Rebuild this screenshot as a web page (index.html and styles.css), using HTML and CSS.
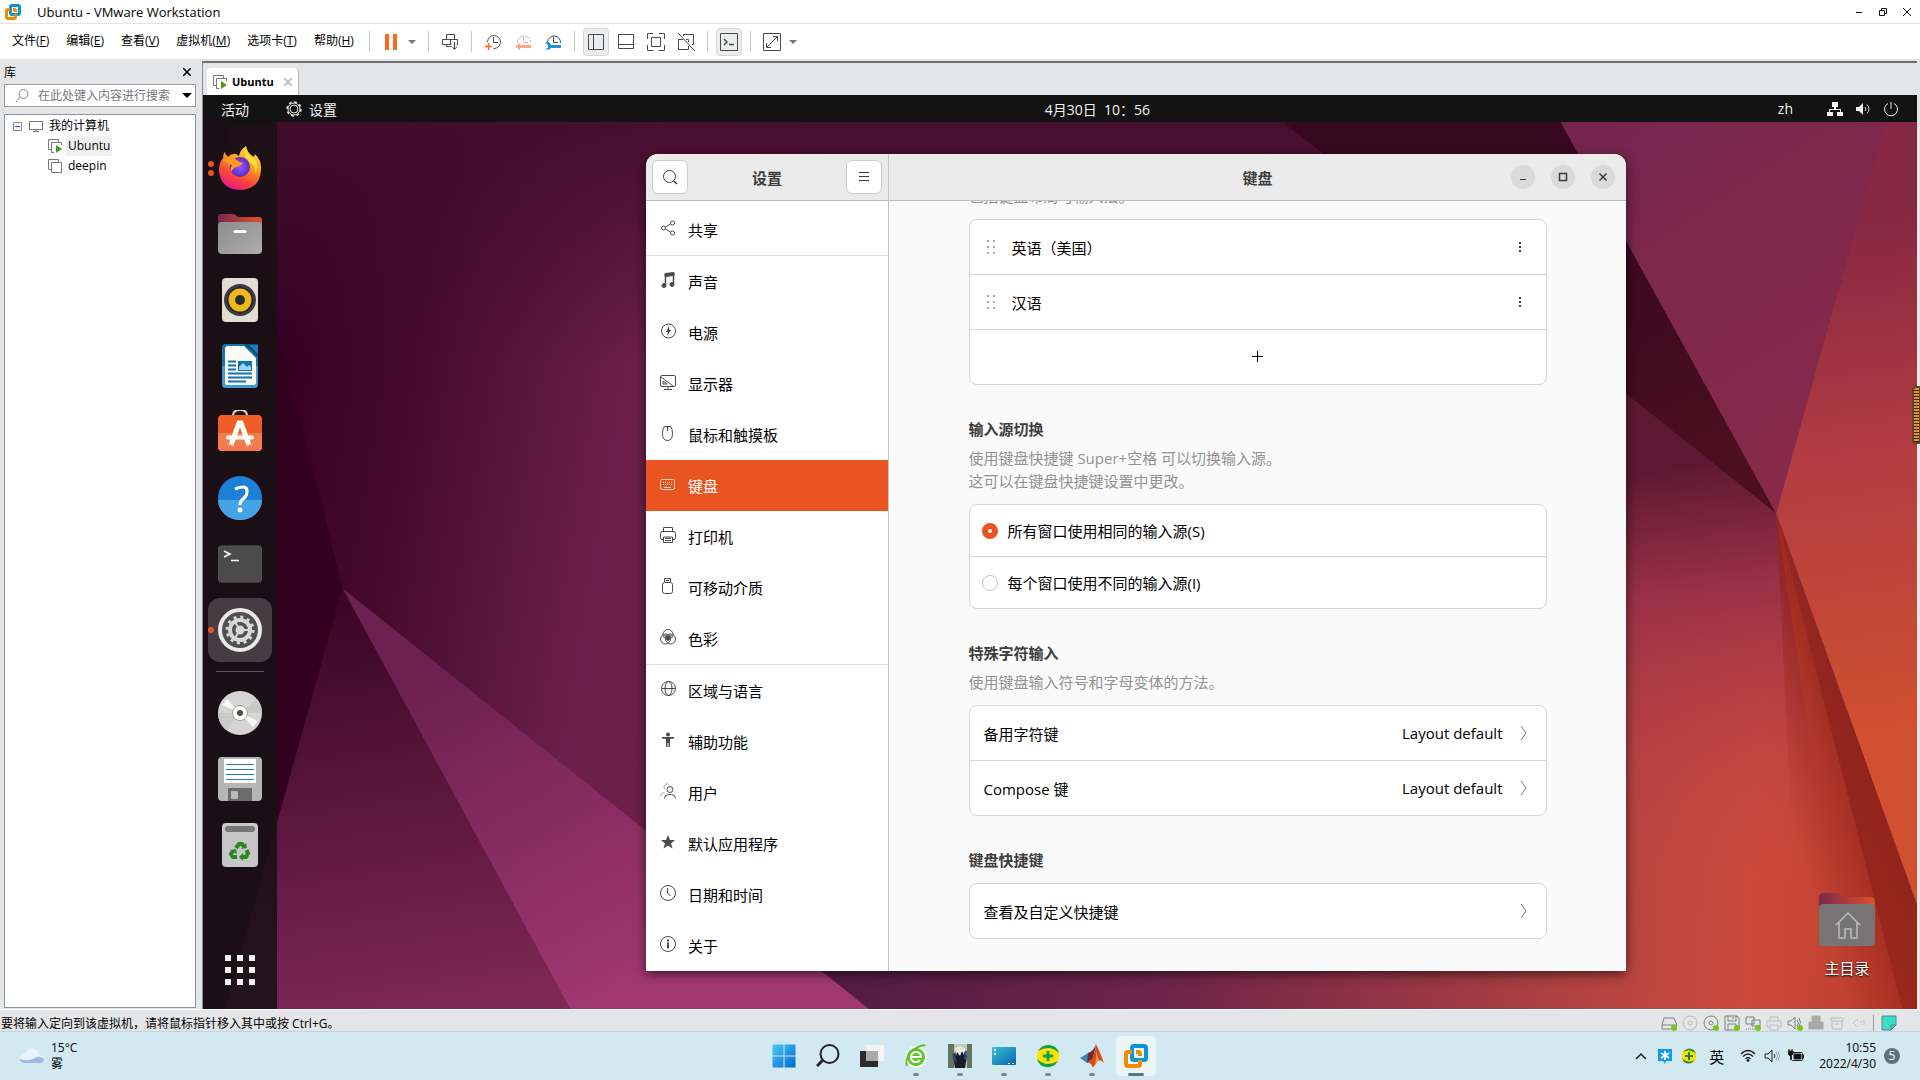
FILE: index.html
```html
<!DOCTYPE html>
<html lang="zh-CN">
<head>
    <meta charset="UTF-8">
    <meta name="viewport" content="width=device-width, initial-scale=1.0">
    <title>Ubuntu - VMware Workstation</title>
    <link rel="stylesheet" href="styles.css">
</head>
<body>
    <header class="titlebar">
        <svg class="app-logo" viewBox="0 0 16 16" fill="none" stroke-width="3"><rect x="5.500" y="1.500" width="9" height="9" rx="1.500" stroke="#0c95d3"/><path d="M5 5.500H3Q1.500 5.500 1.500 7v6q0 1.500 1.500 1.500h6q1.500 0 1.500-1.500v-3M8 5.500h1.500q1 0 1 1V8" stroke="#f38b00"/></svg>
        <span class="titlebar-text">Ubuntu - VMware Workstation</span>
        <div class="titlebar-controls">
            <button aria-label="最小化"><svg viewBox="0 0 10 10"><path d="M2 5.500h6"/></svg></button>
            <button aria-label="还原"><svg viewBox="0 0 10 10"><path d="M1.500 3.500h5v5h-5zM3.500 3V1.500h5v5H7"/></svg></button>
            <button aria-label="关闭"><svg viewBox="0 0 10 10"><path d="M1 1l8 8M9 1L1 9"/></svg></button>
        </div>
    </header>

    <div class="menubar">
        <nav class="menus">
            <button>文件(<u>F</u>)</button>
            <button>编辑(<u>E</u>)</button>
            <button>查看(<u>V</u>)</button>
            <button>虚拟机(<u>M</u>)</button>
            <button>选项卡(<u>T</u>)</button>
            <button>帮助(<u>H</u>)</button>
        </nav>
        <span class="sep"></span>
        <div class="tool-split">
            <button class="tool" aria-label="挂起"><svg viewBox="0 0 18 18"><path d="M3 1h4v16H3zM11 1h4v16h-4z" fill="#ff671b"/></svg></button>
            <button class="tool-caret" aria-label="电源选项"><svg viewBox="0 0 8 4"><path d="M0 0h8L4 4z" fill="#777"/></svg></button>
        </div>
        <span class="sep"></span>
        <button class="tool" aria-label="发送按键"><svg viewBox="0 0 18 18" class="line"><path d="M5.500 6.500v-5h8v5M10.500 11.500h-9v-5h15v5h-1M9.500 6.500v5M5.500 11.500v2h5M13.500 9v7M11 13.500l2.500 3 2.500-3"/></svg></button>
        <span class="sep"></span>
        <div class="tool-group">
            <button class="tool" aria-label="拍摄快照"><svg viewBox="0 0 18 18" class="line"><path d="M3.500 9a6.500 6.500 0 1 1 6 6.500M9.500 4v5.500H14"/><path d="M4.500 10v7M1 13.500h7" stroke="#ff671b" stroke-width="1.500"/></svg></button>
            <button class="tool" aria-label="恢复快照"><svg viewBox="0 0 18 18" class="line"><path d="M3.500 10a6.500 6.500 0 0 1 13-1M9.500 4v5.500H14" stroke="#bbb" stroke-dasharray="5 1"/><path d="M1 13.500L6 10v2h11v3H6v2z" fill="#ffa680" stroke="none"/></svg></button>
            <button class="tool" aria-label="管理快照"><svg viewBox="0 0 18 18" class="line"><path d="M3.500 9a6.500 6.500 0 0 1 13 1M9.500 4v5.500H14"/><path d="M1 10q3-2 5 0l1 2h10v3H7q-2 3-6 1l3-1v-3z" fill="#2490dc" stroke="none"/></svg></button>
        </div>
        <span class="sep"></span>
        <div class="tool-group">
            <button class="tool pressed" aria-label="显示库"><svg viewBox="0 0 18 18" class="line"><path d="M1.500 1.500h15v15h-15zM6.500 1.500v15"/></svg></button>
            <button class="tool" aria-label="缩略图栏"><svg viewBox="0 0 18 18" class="line"><path d="M1.500 1.500h15v14h-15zM1.500 11.500h15"/></svg></button>
            <button class="tool" aria-label="全屏"><svg viewBox="0 0 18 18" class="line"><path d="M.5 6V.5H6M12 .5h5.500V6M17.500 12v5.500H12M6 17.500H.5V12M4.500 4.500h9v9h-9z"/></svg></button>
            <button class="tool" aria-label="Unity"><svg viewBox="0 0 18 18" class="line"><path d="M1 0l17 18M6.500 3V1.500h10v10H15M6 6.500H1.500v10h10V13M9 6.500h2.500V9"/></svg></button>
        </div>
        <span class="sep"></span>
        <button class="tool pressed" aria-label="控制台视图"><svg viewBox="0 0 18 18" class="line"><path d="M.5 .5h17v17H.5z"/><path d="M4 6l3 3-3 3M9 11.500h5" stroke-width="1.500"/></svg></button>
        <span class="sep"></span>
        <div class="tool-split">
            <button class="tool" aria-label="拉伸"><svg viewBox="0 0 18 18" class="line"><path d="M.5 .5h17v17H.5zM10 3.500h4.500V8M3.500 10v4.500H8M14.500 3.500l-11 11"/></svg></button>
            <button class="tool-caret" aria-label="拉伸选项"><svg viewBox="0 0 8 4"><path d="M0 0h8L4 4z" fill="#777"/></svg></button>
        </div>
    </div>

    <div class="workspace">
        <aside class="library">
            <div class="library-head">
                <span>库</span>
                <button aria-label="关闭库"><svg viewBox="0 0 8 8"><path d="M0 0l8 8M8 0L0 8"/></svg></button>
            </div>
            <label class="library-search">
                <svg class="search-icon" viewBox="0 0 14 14"><circle cx="8.500" cy="5" r="4.500"/><path d="M5 8L1 13"/></svg>
                <input type="text" placeholder="在此处键入内容进行搜索" aria-label="搜索">
                <svg class="search-caret" viewBox="0 0 10 5"><path d="M0 0h10L5 5z"/></svg>
            </label>
            <ul class="tree">
                <li>
                    <svg class="expander" viewBox="0 0 9 9"><path d="M.5 .5h8v8h-8z" fill="#f4f4f4" stroke="#8a8a8a"/><path d="M2 4.500h5" stroke="#3c56b4"/></svg>
                    <svg class="tree-icon" viewBox="0 0 14 12"><path d="M.5 1.500h13v8H.5zM7 9.500v2M4 11.500h6" fill="none" stroke="#777"/></svg>
                    <span>我的计算机</span>
                </li>
                <li class="child">
                    <svg class="tree-icon" viewBox="0 0 14 14"><path d="M3 10.500H.5V.5h10V3M6 13.500H3.500v-10h10V6" fill="none" stroke="#777"/><path d="M8 6l6 4-6 4z" fill="#4b9b12"/></svg>
                    <span class="selected">Ubuntu</span>
                </li>
                <li class="child">
                    <svg class="tree-icon" viewBox="0 0 14 14"><path d="M3 10.500H.5V.5h10V3M3.500 3.500h10v10h-10z" fill="none" stroke="#777"/></svg>
                    <span>deepin</span>
                </li>
            </ul>
        </aside>

        <main class="console">
            <div class="tabs">
                <div class="tab">
                    <svg class="tree-icon" viewBox="0 0 14 14"><path d="M3 10.500H.5V.5h10V3M6 13.500H3.500v-10h10V6" fill="none" stroke="#777"/><path d="M8 6l6 4-6 4z" fill="#4b9b12"/></svg>
                    <span>Ubuntu</span>
                    <button aria-label="关闭标签"><svg viewBox="0 0 8 8"><path d="M0 0l8 8M8 0L0 8"/></svg></button>
                </div>
            </div>

            <div class="guest">
                <div class="topbar">
                    <div class="topbar-left">
                        <span>活动</span>
                        <span class="topbar-app"><svg viewBox="0 0 16 16" fill="none" stroke="#e8e8e8"><circle cx="8" cy="8" r="7" stroke-width="1.500" stroke-dasharray="2.750 2.750"/><circle cx="8" cy="8" r="6"/><circle cx="8" cy="8" r="4"/></svg>设置</span>
                    </div>
                    <time>4月30日&nbsp; 10：56</time>
                    <div class="topbar-right">
                        <span>zh</span>
                        <div class="topbar-status">
                            <svg viewBox="0 0 16 16"><path d="M5 1h6v5H9v2h5v3h2v4h-6v-4h3V9H3v2h3v4H0v-4h2V8h5V6H5z" fill="#f2f2f2"/></svg>
                            <svg viewBox="0 0 16 16"><path d="M1 6h3l4-4v12l-4-4H1z" fill="#f2f2f2"/><path d="M10 6q2 2 0 4M12 3.500q4 4.500 0 9" fill="none" stroke="#ccc"/></svg>
                            <svg viewBox="0 0 16 16" fill="none" stroke="#eee"><path d="M5 2.500a6.500 6.500 0 1 0 6 0M8 1v7"/></svg>
                        </div>
                    </div>
                </div>

                <div class="desktop">
                    <svg class="wallpaper" viewBox="166 100 1400 725" preserveAspectRatio="none">
                        <defs>
                            <linearGradient id="base" gradientUnits="userSpaceOnUse" x1="240" y1="260" x2="660" y2="330"><stop offset="0" stop-color="#360023"/><stop offset=".3" stop-color="#4a0d30"/><stop offset=".65" stop-color="#6b1f4a"/><stop offset="1" stop-color="#6a2247"/></linearGradient>
                            <linearGradient id="top" gradientUnits="userSpaceOnUse" x1="500" y1="100" x2="500" y2="300"><stop offset="0" stop-color="#430d2b" stop-opacity=".9"/><stop offset="1" stop-color="#430d2b" stop-opacity="0"/></linearGradient>
                            <linearGradient id="magenta" gradientUnits="userSpaceOnUse" x1="350" y1="560" x2="500" y2="824"><stop offset="0" stop-color="#6d2150"/><stop offset="1" stop-color="#a23872"/></linearGradient>
                            <linearGradient id="lowleft" gradientUnits="userSpaceOnUse" x1="280" y1="500" x2="330" y2="824"><stop offset="0" stop-color="#3c0727"/><stop offset="1" stop-color="#7c2754"/></linearGradient>
                            <linearGradient id="floor" gradientUnits="userSpaceOnUse" x1="700" y1="700" x2="1560" y2="750"><stop offset="0" stop-color="#541c44"/><stop offset=".3" stop-color="#6e2449"/><stop offset=".7" stop-color="#b34340"/><stop offset=".85" stop-color="#cc4a3c"/><stop offset="1" stop-color="#ba3b28"/></linearGradient>
                            <linearGradient id="fold" gradientUnits="userSpaceOnUse" x1="1390" y1="380" x2="1430" y2="720"><stop offset="0" stop-color="#5e1932"/><stop offset=".3" stop-color="#9a3147"/><stop offset="1" stop-color="#c84842" stop-opacity="0"/></linearGradient>
                            <linearGradient id="sky" gradientUnits="userSpaceOnUse" x1="1300" y1="110" x2="1480" y2="380"><stop offset="0" stop-color="#76264e"/><stop offset="1" stop-color="#882a49"/></linearGradient>
                            <linearGradient id="edge" gradientUnits="userSpaceOnUse" x1="1500" y1="180" x2="1560" y2="600"><stop offset="0" stop-color="#862743"/><stop offset=".45" stop-color="#b23c42"/><stop offset="1" stop-color="#d0502f"/></linearGradient>
                            <linearGradient id="shade" gradientUnits="userSpaceOnUse" x1="1440" y1="440" x2="1550" y2="800"><stop offset="0" stop-color="#a02e3c"/><stop offset=".5" stop-color="#8f2320"/><stop offset="1" stop-color="#9f2917"/></linearGradient>
                            <linearGradient id="side" gradientUnits="userSpaceOnUse" x1="1478" y1="720" x2="1540" y2="700"><stop offset="0" stop-color="#9c2a1f" stop-opacity="0"/><stop offset="1" stop-color="#92241b" stop-opacity=".8"/></linearGradient>
                            <linearGradient id="dark" gradientUnits="userSpaceOnUse" x1="1300" y1="160" x2="1400" y2="380"><stop offset="0" stop-color="#36081f"/><stop offset="1" stop-color="#4c0f20"/></linearGradient>
                        </defs>
                        <path d="M166 100h1400v725H166z" fill="url(#base)"/>
                        <path d="M166 100h1000v200H166z" fill="url(#top)"/>
                        <path d="M166 30l114 451-96 344h-18z" fill="#330020"/>
                        <path d="M280 481l186 344H184z" fill="url(#lowleft)"/>
                        <path d="M280 481l430 344H466z" fill="url(#magenta)"/>
                        <path d="M527 677h50L1451 420l115 405H710z" fill="url(#floor)"/>
                        <path d="M1200 560l128-238 123 98 60 405h-311z" fill="url(#fold)"/>
                        <path d="M1048 100h227l176 320-123-98z" fill="url(#dark)"/>
                        <path d="M1275 100h265l-89 320z" fill="url(#sky)"/>
                        <path d="M1540 100h26v640L1451 420z" fill="url(#edge)"/>
                        <path d="M1451 420l115 320v85h-12z" fill="url(#shade)"/>
                        <path d="M1451 420l20 405h95v-85z" fill="url(#side)"/>
                    </svg>

                    <nav class="dock">
                        <button class="dock-item" aria-label="Firefox">
                            <span class="dots"><i></i><i></i></span>
                            <svg viewBox="0 0 44 44"><defs><linearGradient id="fx" x1=".8" y1="0" x2=".3" y2="1"><stop offset="0" stop-color="#ffe84a"/><stop offset=".4" stop-color="#ff9a1f"/><stop offset=".7" stop-color="#ff4a36"/><stop offset="1" stop-color="#e6158a"/></linearGradient><radialGradient id="globe"><stop offset="0" stop-color="#9059ff"/><stop offset="1" stop-color="#5b2bc4"/></radialGradient></defs><path d="M28 0q1 7 8 11l1-3q7 7 6 16-1 19-21 20Q2 43 1 24q0-7 4-12l1-6 4 5q4-4 8-3l3 2q1-6 7-10z" fill="url(#fx)"/><circle cx="22" cy="21" r="10" fill="url(#globe)"/><path d="M5 14q6-6 14 0 3 3 6 3-2 3-7 4-4 2-5 5-1-4 1-7-5-1-9-5z" fill="#ff9a1f"/><path d="M28 0q0 9 8 13 6 6 1 16 2-7-5-13-8-7-4-16z" fill="#ffdf37"/></svg>
                        </button>
                        <button class="dock-item" aria-label="文件">
                            <svg viewBox="0 0 44 44"><defs><linearGradient id="fol" x1="0" x2="1"><stop offset="0" stop-color="#78294f"/><stop offset="1" stop-color="#e0502a"/></linearGradient><linearGradient id="gray" x1="0" y1="0" x2="1" y2="1"><stop offset="0" stop-color="#8d8d8d"/><stop offset="1" stop-color="#adadad"/></linearGradient></defs><path d="M0 5q0-3 3-3h13l4 3h21q3 0 3 3v12H0z" fill="url(#fol)"/><rect y="10" width="44" height="32" rx="4" fill="url(#gray)"/><path d="M17 19.500h10" stroke="#fff" stroke-width="3" stroke-linecap="round"/></svg>
                        </button>
                        <button class="dock-item" aria-label="Rhythmbox">
                            <svg viewBox="0 0 44 44"><rect x="4" width="36" height="44" rx="4" fill="#e3ded3"/><circle cx="22" cy="22" r="16" fill="#3c3c46"/><circle cx="22" cy="22" r="13" fill="#222"/><circle cx="22" cy="22" r="11.500" fill="#efb915"/><circle cx="22" cy="22" r="5" fill="#292929"/></svg>
                        </button>
                        <button class="dock-item" aria-label="LibreOffice Writer">
                            <svg viewBox="0 0 44 44"><rect x="4" width="36" height="44" rx="4" fill="#1673aa"/><path d="M4 22h36v18q0 4-4 4H8q-4 0-4-4z" fill="#3b9bd2"/><path d="M10 2h16l12 12v25q0 2-2 2H9q-2 0-2-2V5q0-3 3-3z" fill="#fbfbfb"/><path d="M26 0h14v13z" fill="#104a75"/><path d="M31 1h9v9z" fill="#1683bd"/><path d="M10 17.500h8M10 21.500h8M10 25.500h8M10 29.500h24M10 33.500h24M10 37.500h18" stroke="#1673aa" stroke-width="2"/><path d="M20 17h14v10H20z" fill="#1673aa"/><path d="M21 26v-3l4-4 4 4 2-2 2 2v3z" fill="#9bd6f2"/></svg>
                        </button>
                        <button class="dock-item" aria-label="Ubuntu Software">
                            <svg viewBox="0 0 44 44"><path d="M15 6q0-6 7-6t7 6" fill="none" stroke="#eadba8" stroke-width="2"/><rect y="5" width="44" height="36" rx="4" fill="#ef5e27"/><path d="M0 23h44v14q0 4-4 4H4q-4 0-4-4z" fill="#f37c4c"/><path d="M13 35l8-22h2l8 22" fill="none" stroke="#fff" stroke-width="5"/><path d="M10 27.500h24" stroke="#fff" stroke-width="4" stroke-linecap="round"/></svg>
                        </button>
                        <button class="dock-item" aria-label="帮助">
                            <svg viewBox="0 0 44 44"><circle cx="22" cy="22" r="22" fill="#1b80d6"/><path d="M0 24h44a22 20 0 0 1-44 0z" fill="#45a3e6"/><path d="M17 13q13-5 12 3 0 4-4 7-3 2-3 6" fill="none" stroke="#fff" stroke-width="3"/><circle cx="22" cy="34" r="2.500" fill="#fff"/></svg>
                        </button>
                        <button class="dock-item" aria-label="终端">
                            <svg viewBox="0 0 44 44"><rect y="4" width="44" height="36" rx="4" fill="#4b4b4b" stroke="#5d5d5d"/><path d="M6 9l6 3-6 3M13 18.500h8" fill="none" stroke="#fff" stroke-width="1.500"/></svg>
                        </button>
                        <button class="dock-item active" aria-label="设置">
                            <span class="dots"><i></i></span>
                            <svg viewBox="0 0 44 44" fill="none"><circle cx="22" cy="22" r="20" fill="#505050" stroke="#e9e9e7" stroke-width="4"/><circle cx="22" cy="22" r="13" stroke="#d7d7d7" stroke-width="3" stroke-dasharray="3 3.800"/><circle cx="22" cy="22" r="10" stroke="#d7d7d7" stroke-width="4"/><circle cx="22" cy="22" r="4.500" fill="#d7d7d7"/><path d="M25 22h8M20 19l-4-7M20 25l-4 7" stroke="#d7d7d7" stroke-width="2"/></svg>
                        </button>
                        <hr>
                        <button class="dock-item" aria-label="光盘">
                            <svg viewBox="0 0 44 44"><circle cx="22" cy="22" r="22" fill="#d5d5d5"/><path d="M22 22L0 22a22 22 0 0 0 8 17zM22 22l17-14a22 22 0 0 1 5 14z" fill="#c9c9c9"/><path d="M22 22L4 14l5-6zM22 22l18 8-5 6z" fill="#f8f8f8"/><circle cx="22" cy="22" r="7.500" fill="#fff" stroke="#aaa08d"/><circle cx="22" cy="22" r="3" fill="#4b4b4b"/></svg>
                        </button>
                        <button class="dock-item" aria-label="软盘">
                            <svg viewBox="0 0 44 44"><rect width="44" height="44" rx="4" fill="#b5b5b5"/><path d="M6 2h32v24H6z" fill="#fff"/><path d="M8 7.500h28M8 12.500h28M8 17.500h28M8 22.500h28" stroke="#1c7fae"/><path d="M10 31h24v13H10z" fill="#6c6c6c"/><rect x="13" y="34" width="7" height="8" rx="1" fill="#bbb"/></svg>
                        </button>
                        <button class="dock-item" aria-label="回收站">
                            <svg viewBox="0 0 44 44"><rect x="4" width="36" height="44" rx="4" fill="#c6c6c6"/><rect x="7" y="3" width="30" height="6" rx="3" fill="#777"/><g fill="none" stroke="#29881f" stroke-width="4"><path d="M18 25l3-4h3l2 3M28.500 27l1.500 3-2 4h-4M19 34h-4l-2-3 2-3"/></g><path d="M23 26l6-1-1-5zM25 30v8l-4-4zM12 27l6-1 1 5z" fill="#29881f"/></svg>
                        </button>
                        <button class="dock-item apps" aria-label="显示应用程序">
                            <svg viewBox="0 0 44 44" fill="#f0f0f0"><path d="M7 7h6v6H7zM19 7h6v6h-6zM31 7h6v6h-6zM7 19h6v6H7zM19 19h6v6h-6zM31 19h6v6h-6zM7 31h6v6H7zM19 31h6v6h-6zM31 31h6v6h-6z"/></svg>
                        </button>
                    </nav>

                    <a class="home-icon" href="#">
                        <svg viewBox="0 0 56 54"><path d="M0 5q0-5 5-5h14l6 4h26q5 0 5 5v14H0z" fill="url(#fol)"/><rect y="11" width="56" height="42" rx="4" fill="#767475"/><path d="M17 32l12-12 12 12M20 30v15h6v-9h6v9h6V30" fill="none" stroke="#bbb" stroke-width="1.500"/></svg>
                        <span>主目录</span>
                    </a>

                    <section class="settings">
                        <header class="settings-header">
                            <div class="header-side">
                                <button aria-label="搜索设置"><svg viewBox="0 0 16 16"><circle cx="7.500" cy="7.500" r="6"/><path d="M12 12l3 3" stroke-width="1.500"/></svg></button>
                                <h1>设置</h1>
                                <button aria-label="菜单"><svg viewBox="0 0 16 16"><path d="M3 3.500h10M3 7.500h10M3 11.500h10"/></svg></button>
                            </div>
                            <div class="header-main">
                                <h2>键盘</h2>
                                <div class="window-controls">
                                    <button aria-label="最小化"><svg viewBox="0 0 16 16"><path d="M5 10.500h6"/></svg></button>
                                    <button aria-label="最大化"><svg viewBox="0 0 16 16"><path d="M4.500 4.500h7v7h-7z" stroke-width="1.500"/></svg></button>
                                    <button aria-label="关闭"><svg viewBox="0 0 16 16"><path d="M4.500 4.500l7 7M11.500 4.500l-7 7" stroke-width="1.500"/></svg></button>
                                </div>
                            </div>
                        </header>

                        <div class="settings-body">
                            <nav class="settings-nav">
                                <a href="#"><svg viewBox="0 0 16 16"><circle cx="3.500" cy="8" r="2"/><circle cx="12.500" cy="3" r="2"/><circle cx="12.500" cy="13" r="2"/><path d="M5.500 7l5-3M5.500 9l5 3"/></svg>共享</a>
                                <hr>
                                <a href="#"><svg viewBox="0 0 16 16"><path d="M5.500 13V2.500l8-1V12" stroke-width="1.500"/><path d="M5 1.500l9-1v3l-9 1z" class="fill"/><circle cx="4" cy="13.500" r="2" class="fill"/><circle cx="12" cy="12.500" r="2" class="fill"/></svg>声音</a>
                                <a href="#"><svg viewBox="0 0 16 16"><circle cx="8.500" cy="8" r="7"/><path d="M9 3L6 9h2l-1 4 4-6H9z" class="fill" stroke="none"/></svg>电源</a>
                                <a href="#"><svg viewBox="0 0 16 16"><rect x=".5" y="1.500" width="15" height="11" rx="1.500"/><path d="M1 3l12 9M4 15.500h8M8 13v2M3 7v3h4z" /></svg>显示器</a>
                                <a href="#"><svg viewBox="0 0 16 16"><path d="M4.500 1.500h6q2 2 2 7 0 7-5 7t-5-7q0-5 2-7zM7.500 1.500V6"/></svg>鼠标和触摸板</a>
                                <a href="#" class="current"><svg viewBox="0 0 16 16"><rect x=".5" y="3.500" width="14" height="10" rx="1.500"/><path d="M3 6.500h10M3 8.500h10" stroke-dasharray="1 1"/><path d="M4 11.500h7"/></svg>键盘</a>
                                <a href="#"><svg viewBox="0 0 16 16"><path d="M3.500 4.500v-4h9v4M3.500 12.500H2q-1.500 0-1.500-2v-4q0-2 2-2h11q2 0 2 2v4q0 2-1.500 2h-1.500M3.500 10v5.500h9V10zM5 11.500h6M5 13.500h6"/></svg>打印机</a>
                                <a href="#"><svg viewBox="0 0 16 16"><rect x="2.500" y="4.500" width="10" height="11" rx="2"/><path d="M4.500 4V.5h6V4M6 2.500h3" /></svg>可移动介质</a>
                                <a href="#"><svg viewBox="0 0 16 16"><circle cx="8" cy="5.500" r="5"/><circle cx="5.500" cy="10" r="5"/><circle cx="10.500" cy="10" r="5"/><path d="M4 5.500h8l-1 4-3 3-3-3z" fill="#777" stroke="none"/><circle cx="8" cy="9" r="2" class="fill"/></svg>色彩</a>
                                <hr>
                                <a href="#"><svg viewBox="0 0 16 16"><circle cx="8.500" cy="7.500" r="7"/><ellipse cx="8.500" cy="7.500" rx="3.500" ry="7"/><path d="M2 7.500h13"/></svg>区域与语言</a>
                                <a href="#"><svg viewBox="0 0 16 16"><circle cx="8" cy="2.500" r="2" class="fill" stroke="none"/><path d="M2 5h12v1.500l-4 .5v8H8.500v-4h-1v4H6V7l-4-.5z" class="fill" stroke="none"/></svg>辅助功能</a>
                                <a href="#"><svg viewBox="0 0 16 16"><circle cx="10" cy="6.500" r="3"/><path d="M4.500 15.500q0-4 4-4h3q4 0 4 4"/><path d="M9 1.500q-4-2-5 2 0 2 1 3M.5 13.500q0-4 4-4" stroke="#aaa"/></svg>用户</a>
                                <a href="#"><svg viewBox="0 0 16 16"><path d="M8 1l2 5h5l-4 3.500 1.500 5L8 11.500l-4.500 3 1.500-5L1 6h5z" class="fill" stroke="none"/></svg>默认应用程序</a>
                                <a href="#"><svg viewBox="0 0 16 16"><circle cx="8" cy="8" r="7.500"/><path d="M7.500 3v5l3 3"/></svg>日期和时间</a>
                                <a href="#"><svg viewBox="0 0 16 16"><circle cx="8" cy="8" r="7.500"/><path d="M8 3.500v2M7 7.500h1v5" stroke-width="2"/></svg>关于</a>
                            </nav>

                            <div class="settings-main">
                                <div class="panel">
                                    <p class="desc">包括键盘布局与输入法。</p>
                                    <ul class="card">
                                        <li class="source">
                                            <svg class="grip" viewBox="0 0 10 16"><path d="M1 1h2v2H1zM7 1h2v2H7zM1 7h2v2H1zM7 7h2v2H7zM1 13h2v2H1zM7 13h2v2H7z"/></svg>
                                            <span>英语（美国）</span>
                                            <button class="more" aria-label="更多"><svg viewBox="0 0 16 16"><path d="M7 3h2v2H7zM7 7h2v2H7zM7 11h2v2H7z"/></svg></button>
                                        </li>
                                        <li class="source">
                                            <svg class="grip" viewBox="0 0 10 16"><path d="M1 1h2v2H1zM7 1h2v2H7zM1 7h2v2H1zM7 7h2v2H7zM1 13h2v2H1zM7 13h2v2H7z"/></svg>
                                            <span>汉语</span>
                                            <button class="more" aria-label="更多"><svg viewBox="0 0 16 16"><path d="M7 3h2v2H7zM7 7h2v2H7zM7 11h2v2H7z"/></svg></button>
                                        </li>
                                        <li><button class="add" aria-label="添加输入源"><svg viewBox="0 0 12 12"><path d="M5.500 0v11M0 5.500h11"/></svg></button></li>
                                    </ul>

                                    <h3>输入源切换</h3>
                                    <p class="desc with-title">使用键盘快捷键 Super+空格 可以切换输入源。<br>这可以在键盘快捷键设置中更改。</p>
                                    <div class="card radios">
                                        <label><input type="radio" name="switch" checked>所有窗口使用相同的输入源(S)</label>
                                        <label><input type="radio" name="switch">每个窗口使用不同的输入源(I)</label>
                                    </div>

                                    <h3>特殊字符输入</h3>
                                    <p class="desc with-title">使用键盘输入符号和字母变体的方法。</p>
                                    <div class="card">
                                        <a class="link-row" href="#"><span>备用字符键</span><em>Layout default</em><svg viewBox="0 0 8 16"><path d="M1 1l5 7-5 7"/></svg></a>
                                        <a class="link-row" href="#"><span>Compose 键</span><em>Layout default</em><svg viewBox="0 0 8 16"><path d="M1 1l5 7-5 7"/></svg></a>
                                    </div>

                                    <h3>键盘快捷键</h3>
                                    <div class="card">
                                        <a class="link-row" href="#"><span>查看及自定义快捷键</span><svg viewBox="0 0 8 16"><path d="M1 1l5 7-5 7"/></svg></a>
                                    </div>
                                </div>
                            </div>
                        </div>
                    </section>
                </div>
            </div>
        </main>
        <div class="meter"></div>
    </div>

    <div class="statusbar">
        <span>要将输入定向到该虚拟机，请将鼠标指针移入其中或按 Ctrl+G。</span>
        <div class="devices">
            <svg viewBox="0 0 16 16"><path d="M3 3h10l3 7v4H1v-4zM1 10h15"/><circle cx="13" cy="13" r="3" class="on"/></svg>
            <svg viewBox="0 0 16 16" class="off"><circle cx="8" cy="8" r="7"/><circle cx="8" cy="8" r="2"/></svg>
            <svg viewBox="0 0 16 16"><circle cx="8" cy="8" r="7"/><circle cx="8" cy="8" r="2"/><circle cx="13" cy="13" r="3" class="on"/></svg>
            <svg viewBox="0 0 16 16"><path d="M1 1h12l2 2v12H1zM4 1v5h8V1M4 15V9h8v6M9 2v2"/><circle cx="13" cy="13" r="3" class="on"/></svg>
            <svg viewBox="0 0 16 16"><path d="M1 2h8v7H1zM7 5h8v6H7z"/><path d="M1 14h10" stroke-dasharray="1 1"/><circle cx="13" cy="13" r="3" class="on"/></svg>
            <svg viewBox="0 0 16 16" class="off"><path d="M4 6V2h8v4M4 12H1V6h14v6h-3M4 10h8v5H4z"/></svg>
            <svg viewBox="0 0 16 16"><path d="M1 6h3l4-4v12l-4-4H1zM10 5q3 3 0 6M12 3q3 5 0 8"/><circle cx="13" cy="13" r="3" class="on"/></svg>
            <svg viewBox="0 0 16 16"><path d="M4 1h8v6h3v7H1V7h3z" fill="#aaa" stroke="#aaa"/></svg>
            <svg viewBox="0 0 16 16" class="off"><path d="M2 3h12v3H2zM3 6v8h10V6M6 9h4"/></svg>
            <svg viewBox="0 0 16 16" class="off"><path d="M8 4L3 8l5 4M11 6v4M14 5v6" stroke-dasharray="2 1"/></svg>
            <span class="device-sep"></span>
            <svg viewBox="0 0 16 16"><path d="M1 1h14v9l-5 5H1z" fill="#37dfc9" stroke="#628087"/><path d="M10 15v-5h5" stroke="#628087"/></svg>
        </div>
    </div>

    <footer class="taskbar">
        <div class="weather">
            <svg viewBox="0 0 24 18"><path d="M5 16q-5 0-5-5t6-5Q8 0 14 2q5 1 5 6 5 0 5 4t-4 4z" fill="#e9f1fb"/><path d="M5 16q-5 0-5-4 8 3 15-1 5-3 9 1 0 4-4 4z" fill="#9dbbdf"/></svg>
            <div><span>15°C</span><span>雾</span></div>
        </div>
        <div class="apps-row">
            <button aria-label="开始"><svg viewBox="0 0 24 24"><defs><linearGradient id="win" x1="0" y1="0" x2="1" y2="1"><stop offset="0" stop-color="#4cc8f7"/><stop offset="1" stop-color="#0069cc"/></linearGradient></defs><path d="M.5 .5h11v11H.5zM12.500 .5h11v11h-11zM.5 12.500h11v11H.5zM12.500 12.500h11v11h-11z" fill="url(#win)"/></svg></button>
            <button aria-label="搜索"><svg viewBox="0 0 24 24" fill="none" stroke="#222" stroke-width="2"><circle cx="13.500" cy="10" r="9"/><path d="M7 16l-6 6" stroke-width="3"/></svg></button>
            <button aria-label="任务视图"><svg viewBox="0 0 24 24"><path d="M0 7h18v16H0z" fill="#2b2b2b"/><path d="M6 1h18v16H6z" fill="#f4f4f4"/><path d="M6 7h12v10H6z" fill="#aaa"/></svg></button>
            <button class="running" aria-label="浏览器"><svg viewBox="0 0 24 24" fill="none"><circle cx="12" cy="13" r="11" fill="#effce8"/><circle cx="12" cy="13" r="9" fill="#5cc42c"/><path d="M7 13h10q0-5-5-5t-5 5 5 5q3 0 4-2" stroke="#fff" stroke-width="2"/><path d="M3 22Q0 12 12 4q8-4 9-2" stroke="#64bc33" stroke-width="2"/></svg></button>
            <button class="running" aria-label="应用"><svg viewBox="0 0 24 24"><rect width="24" height="24" rx="2" fill="#b9cdb7"/><path d="M0 0h6v24H0zM19 0h5v24h-5z" fill="#657361"/><path d="M7 8h10l2 4-2 12H7L5 12z" fill="#191d2a"/><path d="M7 5q5-6 10 0l-1 6-2-4-2 5-3-4-1 4z" fill="#e7e8db"/><path d="M5 10l3 8M18 7l-1 8" stroke="#34439a" stroke-width="2"/></svg></button>
            <button class="running" aria-label="文件"><svg viewBox="0 0 24 24"><defs><linearGradient id="blue" x1="0" y1="0" x2="1" y2="1"><stop offset="0" stop-color="#38c3d9"/><stop offset="1" stop-color="#0764ae"/></linearGradient></defs><rect y="3" width="24" height="18" rx="1" fill="url(#blue)"/><path d="M2 5h2v2H2zM2 9h2v2H2zM16 19h2v1h-2zM20 19h2v1h-2z" fill="#fff"/></svg></button>
            <button class="running" aria-label="安全卫士"><svg viewBox="0 0 24 24"><circle cx="12" cy="12" r="11" fill="#ffe002"/><path d="M2 7Q6 0 14 1q7 1 9 8-4-4-9-5-7 0-12 3zM22 17q-4 7-12 6-7-1-9-8 4 4 9 5 7 0 12-3z" fill="#08a547"/><path d="M12 7v10M7 12h10" stroke="#08a547" stroke-width="3"/></svg></button>
            <button class="running" aria-label="MATLAB"><svg viewBox="0 0 24 24"><path d="M0 14l8-5 5 4-6 6z" fill="#3c87ba"/><path d="M8 9q5-1 8-9l-3 15-6 4z" fill="#6d2b35"/><path d="M16 0q4 8 8 19-4-5-7-1-3 5-5 5 0-4-4-4 7-5 8-19z" fill="#d9481d"/><path d="M16 0q0 9 3 16l-4 4q2-8 1-20z" fill="#fba32e"/></svg></button>
            <button class="running focused" aria-label="VMware"><svg viewBox="0 0 24 24" fill="none" stroke-width="4"><rect x="8" y="2" width="14" height="14" rx="2" stroke="#0c95d3"/><path d="M8 8H4q-2 0-2 2v10q0 2 2 2h10q2 0 2-2v-4M12 8h2q2 0 2 2v2" stroke="#f38b00"/></svg></button>
        </div>
        <div class="tray">
            <svg viewBox="0 0 16 16" class="stroke"><path d="M3 11l5-5 5 5" stroke-width="1.500"/></svg>
            <svg viewBox="0 0 16 16"><path d="M1 1h14v12H9l-1 3-2-3H1z" fill="#0b9bf5"/><path d="M8 3v9M4 5l8 5M12 5l-8 5" stroke="#fff" stroke-width="2"/></svg>
            <svg viewBox="0 0 16 16"><circle cx="8" cy="8" r="7.500" fill="#ffdd08"/><path d="M2 4q5-6 11-2l2 4Q9 0 2 4zM14 12q-5 6-11 2l-2-4q6 6 13 2z" fill="#289638"/><path d="M8 4v8M4 8h8" stroke="#178b34" stroke-width="2"/></svg>
            <span class="ime">英</span>
            <svg viewBox="0 0 16 16" class="stroke"><path d="M1 6q7-7 14 0M3 8.500q5-5 10 0M5.500 11q2.500-3 5 0" stroke-width="1.500"/><circle cx="8" cy="12.500" r="1" fill="#222"/></svg>
            <svg viewBox="0 0 16 16" class="stroke"><path d="M1 6h3l4-4v12l-4-4H1zM10 6q2 2 0 4"/><path d="M12 4q3 4 0 8M14 3q3 5 0 10" stroke="#9aabb2"/></svg>
            <svg viewBox="0 0 16 16" class="stroke"><rect x="3.500" y="4.500" width="11" height="8" rx="1"/><path d="M6 6h7v5H6zM0 3h5v3L3 8H2L0 6zM15 7h1v3h-1z" fill="#111"/><path d="M1 1v2M4 1v2M2.500 8v4"/></svg>
            <time class="clock"><span>10:55</span><span>2022/4/30</span></time>
            <span class="badge">5</span>
        </div>
    </footer>
</body>
</html>
```
FILE: styles.css
```css
* {
    margin: 0;
    padding: 0;
    box-sizing: border-box;
}

body {
    height: 100vh;
    display: flex;
    flex-direction: column;
    overflow: hidden;
    font-family: "Open Sans", "Noto Sans CJK SC", sans-serif;
    font-size: 12px;
    color: #000;
    background: #e4e5e7;
}

button {
    border: none;
    background: none;
    font: inherit;
    color: inherit;
    display: flex;
    align-items: center;
    justify-content: center;
}

a {
    color: inherit;
    text-decoration: none;
}

ul {
    list-style: none;
}

svg {
    display: block;
    flex-shrink: 0;
}

/* Host window */
.titlebar {
    height: 24px;
    display: flex;
    align-items: center;
    padding: 0 6px 0 5px;
    background: #fff;
    border-bottom: 1px solid #e3e3e3;
}

.app-logo {
    width: 16px;
    height: 16px;
}

.titlebar-text {
    margin-left: 16px;
    font-size: 13px;
}

.titlebar-controls {
    margin-left: auto;
    display: flex;
    gap: 10px;
}

.titlebar-controls button {
    width: 14px;
}

.titlebar-controls svg {
    width: 10px;
    height: 10px;
    fill: none;
    stroke: #111;
}

.menubar {
    height: 36px;
    display: flex;
    align-items: center;
    background: #fff;
    border-bottom: 1px solid #e3e3e3;
}

.menus {
    display: flex;
    gap: 17px;
    padding: 0 7px 3px 12px;
}

.sep {
    width: 1px;
    height: 21px;
    margin: 0 8px;
    background: #c8c8c8;
}

.tool-group {
    display: flex;
    gap: 4px;
}

.tool-split {
    display: flex;
}

.tool {
    width: 26px;
    height: 28px;
}

.tool svg {
    width: 18px;
    height: 18px;
}

.tool .line {
    fill: none;
    stroke: #4a4a4a;
}

.tool.pressed {
    background: #ecedee;
    border: 1px solid #d6d7d8;
    border-radius: 4px;
}

.tool-caret {
    width: 16px;
}

.tool-caret svg {
    width: 8px;
    height: 4px;
}

.workspace {
    flex: 1;
    min-height: 0;
    display: flex;
    position: relative;
}

/* Library */
.library {
    width: 202px;
    display: flex;
    flex-direction: column;
    padding: 0 6px 1px 4px;
}

.library-head {
    height: 24px;
    display: flex;
    align-items: center;
    justify-content: space-between;
    padding-right: 5px;
}

.library-head svg {
    width: 8px;
    height: 8px;
    stroke: #000;
    stroke-width: 1.5;
}

.library-search {
    height: 23px;
    display: flex;
    align-items: center;
    padding: 0 3px 0 10px;
    background: #fff;
    border: 1px solid #9a9c9f;
}

.library-search input {
    flex: 1;
    min-width: 0;
    margin-left: 9px;
    border: none;
    outline: none;
    font: inherit;
}

.library-search input::placeholder {
    color: #777;
}

.search-icon {
    width: 14px;
    height: 14px;
    fill: none;
    stroke: #888;
}

.search-caret {
    width: 10px;
    height: 5px;
}

.tree {
    flex: 1;
    margin-top: 7px;
    padding: 1px 0 0 8px;
    background: #fff;
    border: 1px solid #8c959c;
}

.tree li {
    height: 20px;
    display: flex;
    align-items: center;
}

.expander {
    width: 9px;
    height: 9px;
    margin-right: 7px;
}

.tree-icon {
    width: 14px;
    height: 14px;
}

.tree span {
    line-height: 20px;
    padding: 0 2px;
    margin-left: 4px;
}

.tree .child {
    padding-left: 35px;
}

.tree .selected {
    background: #f0f0f0;
}

/* Console */
.console {
    flex: 1;
    min-width: 0;
    display: flex;
    flex-direction: column;
    margin-right: 3px;
    border-top: 2px solid #6e6e6e;
    border-left: 1px solid #8c8f90;
    margin-top: 1px;
}

.tabs {
    height: 32px;
    display: flex;
    align-items: flex-end;
    padding-left: 4px;
}

.tab {
    height: 27px;
    display: flex;
    align-items: center;
    gap: 5px;
    padding: 0 6px;
    background: #fff;
    border-right: 1px solid #b5b5b5;
    border-radius: 4px 4px 0 0;
    font-size: 11px;
    font-weight: bold;
}

.tab button {
    margin-left: 5px;
}

.tab button svg {
    width: 8px;
    height: 8px;
    stroke: #c2c2c2;
    stroke-width: 2;
}

.guest {
    flex: 1;
    min-height: 0;
    display: flex;
    flex-direction: column;
    font-size: 15px;
}

.topbar {
    height: 27px;
    display: grid;
    grid-template-columns: 11fr auto 10fr;
    align-items: center;
    padding: 0 18px;
    background: #131313;
    color: #f2f2f2;
    font-size: 14px;
}

.topbar time {
    font-family: "Open Sans", "Noto Sans CJK TC", sans-serif;
}

.topbar-left,
.topbar-app,
.topbar-right,
.topbar-status {
    display: flex;
    align-items: center;
}

.topbar-left {
    gap: 37px;
}

.topbar-app {
    gap: 7px;
}

.topbar svg {
    width: 16px;
    height: 16px;
}

.topbar-right {
    justify-content: flex-end;
    gap: 34px;
}

.topbar-status {
    gap: 12px;
}

.desktop {
    flex: 1;
    min-height: 0;
    display: flex;
    position: relative;
    overflow: hidden;
}

.wallpaper {
    position: absolute;
    width: 100%;
    height: 100%;
}

.dock {
    width: 74px;
    position: relative;
    display: flex;
    flex-direction: column;
    align-items: center;
    gap: 2px;
    padding: 14px 0 7px;
    background: rgba(24, 17, 20, 0.88);
}

.dock-item {
    width: 64px;
    height: 64px;
    position: relative;
    border-radius: 12px;
}

.dock-item svg {
    width: 44px;
    height: 44px;
}

.dock-item.active {
    background: #473c42;
}

.dock-item.apps {
    margin-top: auto;
}

.dock-item .dots {
    position: absolute;
    left: 0;
    top: 0;
    bottom: 0;
    display: flex;
    flex-direction: column;
    justify-content: center;
    gap: 3px;
}

.dots i {
    width: 6px;
    height: 6px;
    border-radius: 50%;
    background: #e95420;
}

.dock hr {
    width: 48px;
    margin: 7px 0;
    border: none;
    border-top: 1px solid #5d555a;
}

.home-icon {
    position: absolute;
    right: 42px;
    bottom: 31px;
    display: flex;
    flex-direction: column;
    align-items: center;
    gap: 10px;
    color: #fff;
    text-shadow: 0 1px 2px #000;
}

.home-icon svg {
    width: 56px;
    height: 54px;
}

/* Settings window */
.settings {
    position: absolute;
    top: 32px;
    right: 291px;
    bottom: 38px;
    left: 443px;
    display: flex;
    flex-direction: column;
    overflow: hidden;
    border-radius: 12px 12px 0 0;
    background: #fafafa;
    box-shadow: 0 3px 12px rgba(0, 0, 0, 0.6);
}

.settings-header {
    height: 47px;
    display: flex;
    flex-shrink: 0;
    background: #ebebeb;
    border-bottom: 1px solid #bdbdbd;
    color: #3d3d3d;
}

.settings-header h1,
.settings-header h2 {
    font-size: 15px;
    font-weight: bold;
}

.header-side {
    width: 243px;
    display: flex;
    align-items: center;
    justify-content: space-between;
    padding: 0 6px;
    border-right: 1px solid #c4c4c4;
}

.header-side button {
    width: 36px;
    height: 34px;
    background: #fff;
    border: 1px solid #cdcdcd;
    border-radius: 6px;
}

.settings-header svg {
    width: 16px;
    height: 16px;
    fill: none;
    stroke: #3d3d3d;
}

.header-main {
    flex: 1;
    display: grid;
    grid-template-columns: 1fr auto 1fr;
    align-items: center;
    padding: 0 11px;
}

.header-main h2 {
    grid-column: 2;
}

.window-controls {
    display: flex;
    justify-content: flex-end;
    gap: 16px;
}

.window-controls button {
    width: 24px;
    height: 24px;
    border-radius: 50%;
    background: #dadada;
}

.settings-body {
    flex: 1;
    min-height: 0;
    display: flex;
}

.settings-nav {
    width: 243px;
    padding-top: 3px;
    background: #fff;
    border-right: 1px solid #c4c4c4;
}

.settings-nav a {
    height: 51px;
    display: flex;
    align-items: center;
    gap: 12px;
    padding-left: 14px;
}

.settings-nav svg {
    width: 16px;
    height: 16px;
    margin-bottom: 3px;
    fill: none;
    stroke: #4a4a4a;
}

.settings-nav .fill {
    fill: #4a4a4a;
}

.settings-nav hr {
    border: none;
    border-top: 1px solid #dedede;
}

.settings-nav .current {
    background: #e95420;
    color: #fff;
}

.settings-nav .current svg {
    stroke: #f9d5c8;
}

.settings-main {
    flex: 1;
    min-width: 0;
    display: flex;
    flex-direction: column;
    justify-content: flex-end;
    overflow: hidden;
    padding: 0 32px 32px;
}

.panel {
    width: 100%;
    max-width: 578px;
    margin: 0 auto;
}

.panel h3 {
    margin-top: 33px;
    font-size: 15px;
    line-height: 23px;
    color: #3d3d3d;
}

.desc {
    line-height: 23px;
    color: #929292;
}

.with-title {
    margin-top: 6px;
}

.card {
    margin-top: 11px;
    background: #fff;
    border: 1px solid #d5d5d5;
    border-radius: 8px;
}

.card > * + * {
    border-top: 1px solid #d5d5d5;
}

.source {
    min-height: 54px;
    display: flex;
    align-items: center;
    padding: 0 18px 0 16px;
}

.source + .source,
.link-row + .link-row {
    min-height: 55px;
}

.source span {
    flex: 1;
    margin-left: 16px;
}

.grip {
    width: 10px;
    height: 16px;
    fill: #aaa;
}

.more svg {
    width: 16px;
    height: 16px;
    fill: #3d3d3d;
}

.add {
    width: 100%;
    height: 54px;
}

.add svg {
    width: 12px;
    height: 12px;
    stroke: #000;
}

.radios label {
    height: 51px;
    display: flex;
    align-items: center;
    gap: 10px;
    padding-left: 12px;
}

.radios label + label {
    height: 52px;
}

.radios input {
    appearance: none;
    width: 16px;
    height: 16px;
    border: 1px solid #c4c4c4;
    border-radius: 50%;
    background: #fff;
}

.radios input:checked {
    border: 6px solid #e95420;
}

.link-row {
    min-height: 54px;
    display: flex;
    align-items: center;
    padding: 0 18px 0 14px;
}

.link-row span {
    flex: 1;
}

.link-row em {
    margin-right: 17px;
    font-style: normal;
}

.link-row svg {
    width: 8px;
    height: 16px;
    fill: none;
    stroke: #777;
}

/* Level meter at the screen edge */
.meter {
    position: absolute;
    top: 326px;
    right: 0;
    width: 8px;
    height: 58px;
    border: 2px solid #5a4632;
    border-right-width: 1px;
    border-radius: 4px 0 0 4px;
    background: repeating-linear-gradient(#e8931e 0 2px, #40210c 2px 3px);
}

/* Bottom bars */
.statusbar {
    height: 22px;
    display: flex;
    align-items: center;
    justify-content: space-between;
    padding: 4px 23px 0 1px;
    border-top: 1px solid #fff;
}

.devices {
    display: flex;
    align-items: center;
    gap: 5px;
}

.devices svg {
    width: 16px;
    height: 16px;
    fill: none;
    stroke: #808080;
}

.devices .off {
    stroke: #bcbcbc;
}

.devices .on {
    fill: #7ac51b;
    stroke: none;
}

.device-sep {
    width: 1px;
    height: 16px;
    margin: 0 2px;
    background: #999;
}

.taskbar {
    height: 49px;
    display: grid;
    grid-template-columns: 1fr auto 1fr;
    align-items: center;
    padding: 0 20px;
    background: #d3e9f2;
    border-top: 1px solid #bfd5de;
}

.weather {
    display: flex;
    align-items: center;
    gap: 7px;
}

.weather svg {
    width: 24px;
    height: 18px;
}

.weather span,
.clock span {
    display: block;
    line-height: 16px;
}

.apps-row {
    display: flex;
    gap: 4px;
}

.apps-row button {
    width: 40px;
    height: 40px;
    position: relative;
    border-radius: 4px;
}

.apps-row svg {
    width: 24px;
    height: 24px;
}

.apps-row .focused {
    background: #eaf4f9;
}

.running::after {
    content: "";
    position: absolute;
    bottom: 0;
    width: 6px;
    height: 3px;
    border-radius: 2px;
    background: #7b8b92;
}

.running.focused::after {
    width: 16px;
    background: #5b7685;
}

.tray {
    display: flex;
    align-items: center;
    justify-content: flex-end;
    gap: 8px;
}

.tray svg {
    width: 16px;
    height: 16px;
}

.tray .stroke {
    fill: none;
    stroke: #222;
}

.ime {
    font-size: 15px;
    margin: 0 8px 0 4px;
}

.clock {
    margin-left: 7px;
    text-align: right;
}

.badge {
    width: 16px;
    height: 16px;
    border-radius: 50%;
    background: #5d7280;
    color: #fff;
    line-height: 16px;
    text-align: center;
}
```
